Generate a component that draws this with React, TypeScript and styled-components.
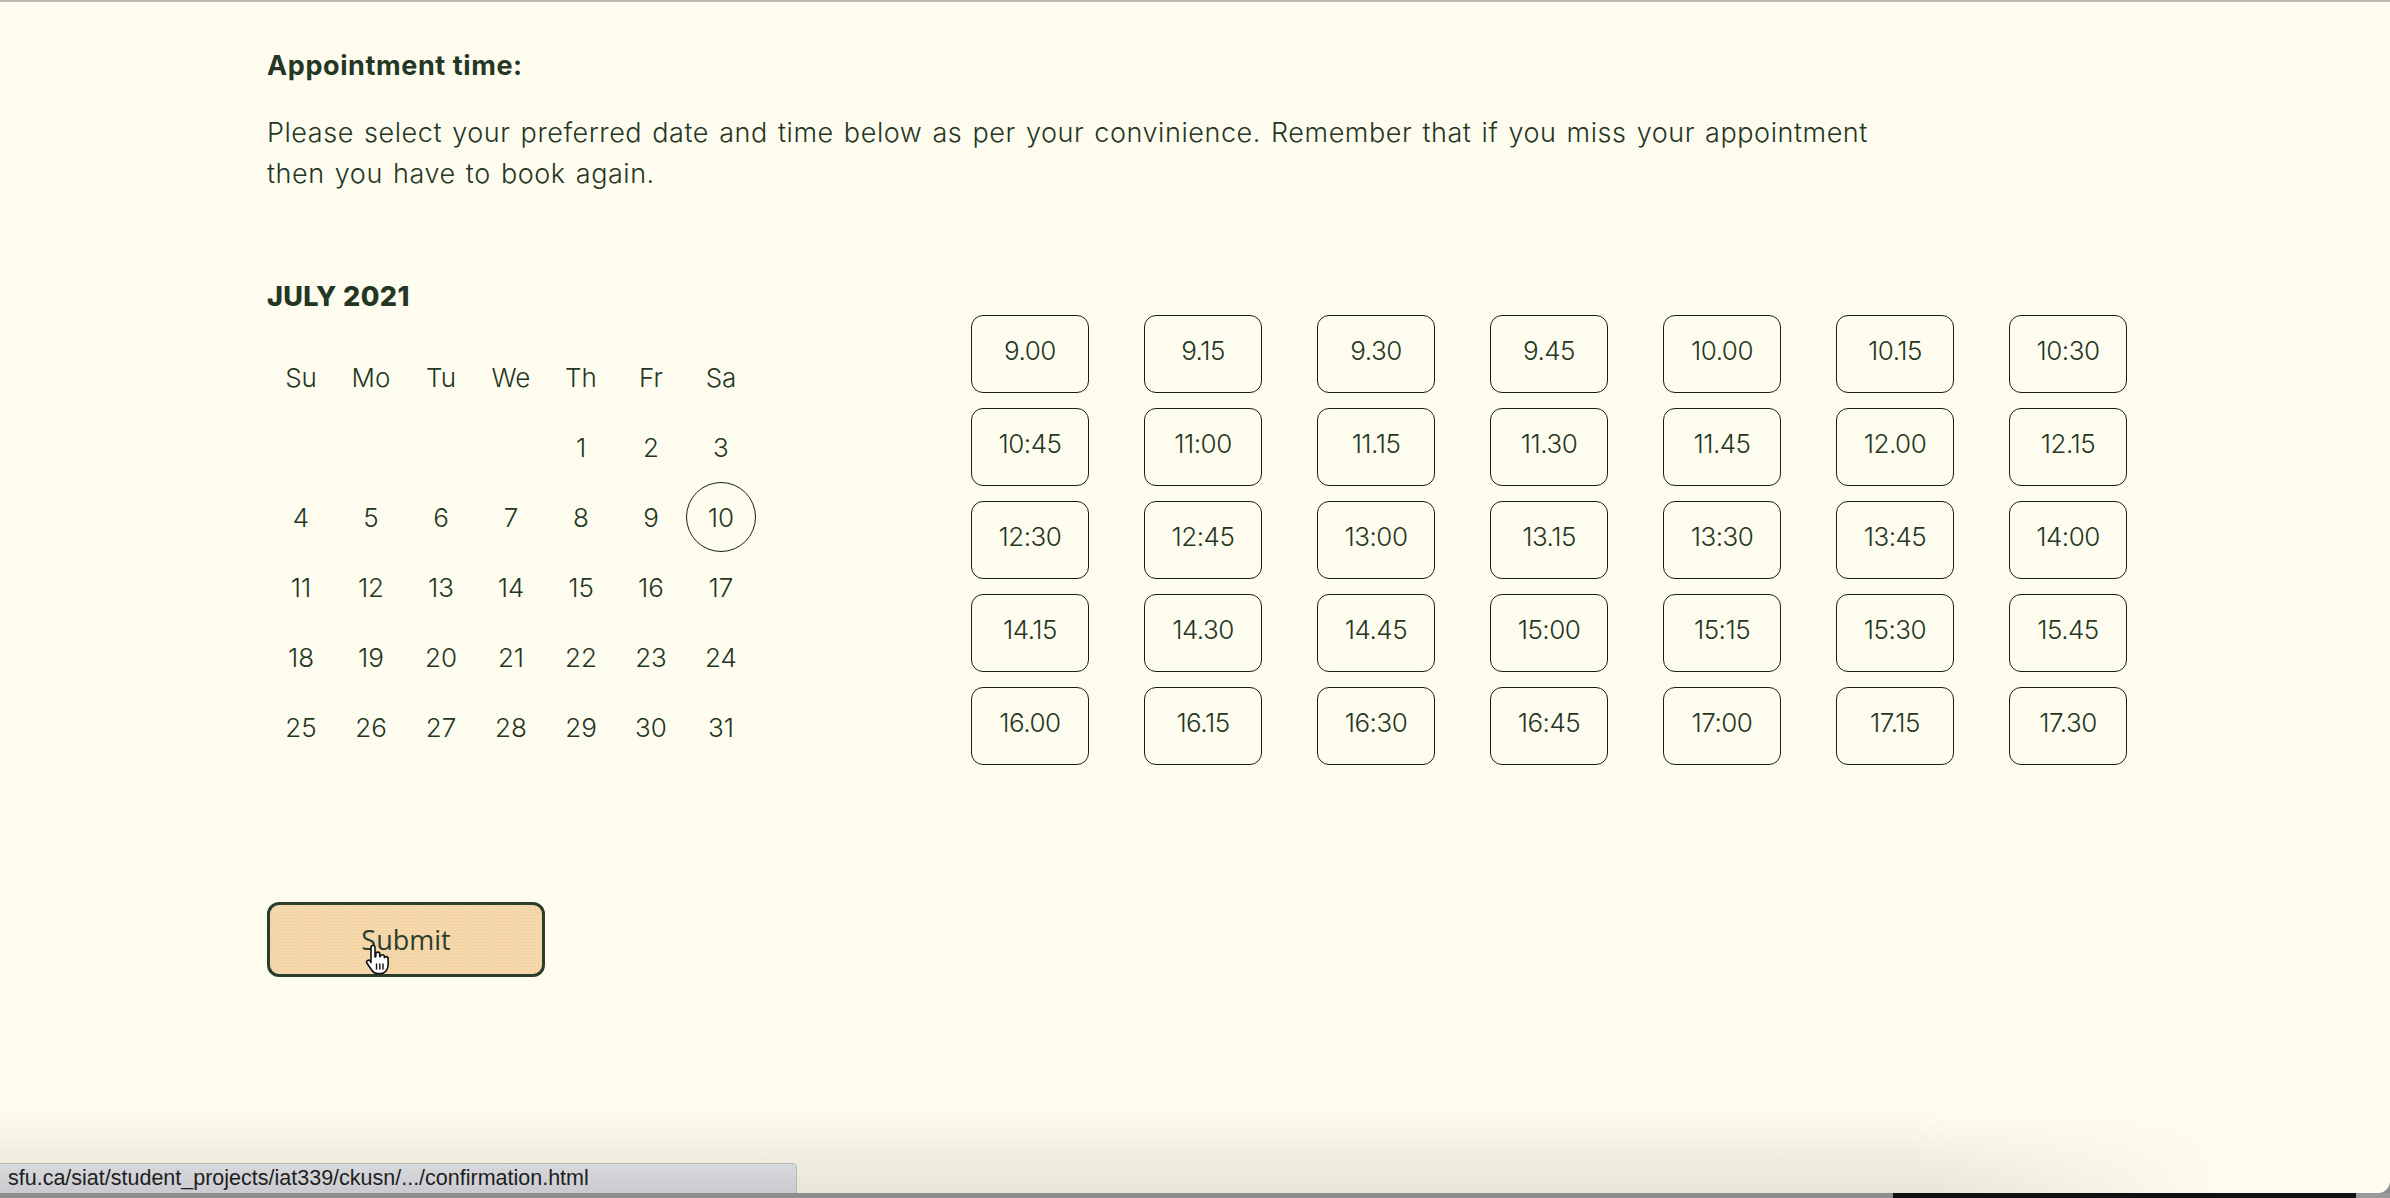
import React from "react";
import styled, { createGlobalStyle } from "styled-components";

const GlobalStyle = createGlobalStyle`
  html, body { margin: 0; padding: 0; }
  body {
    background: #8c8c8c;
    font-family: "Inter", "Lato", sans-serif;
    overflow: hidden;
  }
`;

const INK = "#243624";
const CREAM = "#fefcef";

const Screen = styled.div`
  height: 100vh;
  display: flex;
  flex-direction: column;
`;

const Window = styled.div`
  flex: 1;
  position: relative;
  background: ${CREAM};
  border-top: 2px solid #b9b8b2;
  border-bottom-right-radius: 12px;
  overflow: hidden;
`;

const BottomShade = styled.div`
  position: absolute;
  left: 0;
  right: 0;
  bottom: 0;
  height: 80px;
  pointer-events: none;
  background: linear-gradient(to bottom, rgba(200, 195, 175, 0) 0%, rgba(190, 185, 165, 0.35) 100%);
  -webkit-mask-image: linear-gradient(to right, #000 0%, #000 80%, transparent 93%);
  mask-image: linear-gradient(to right, #000 0%, #000 80%, transparent 93%);
`;

const Content = styled.main`
  padding: 45px 0 0 267px;
  color: ${INK};
`;

const Heading = styled.h2`
  margin: 0;
  font-size: 27px;
  line-height: 38px;
  font-weight: 700;
  letter-spacing: 0.6px;
`;

const Intro = styled.p`
  margin: 27px 0 0;
  max-width: 1610px;
  font-size: 27px;
  line-height: 41px;
  font-weight: 300;
  letter-spacing: 0.55px;
  word-spacing: 2px;
`;

const Booking = styled.section`
  margin-top: 85px;
  display: flex;
  align-items: flex-start;
  gap: 215px;
`;

const CalendarBox = styled.div`
  width: 490px;
  margin-left: -1px;
`;

const Month = styled.h3`
  margin: 0;
  font-size: 27px;
  line-height: 36px;
  font-weight: 800;
  letter-spacing: 0.4px;
  padding-left: 1px;
`;

const DayGrid = styled.div`
  margin-top: 27px;
  display: grid;
  grid-template-columns: repeat(7, 70px);
  grid-auto-rows: 70px;
`;

const Cell = styled.div<{ $selected?: boolean }>`
  display: flex;
  align-items: center;
  justify-content: center;
  box-sizing: border-box;
  font-size: 26px;
  font-weight: 300;
  border-radius: 50%;
  border: 1.5px solid ${(p) => (p.$selected ? "#152015" : "transparent")};
`;

const SlotGrid = styled.div`
  margin-top: 36px;
  display: grid;
  grid-template-columns: repeat(7, 118px);
  grid-auto-rows: 78px;
  column-gap: 55px;
  row-gap: 15px;
`;

const Slot = styled.button`
  box-sizing: border-box;
  display: flex;
  align-items: center;
  justify-content: center;
  padding: 0 0 8px;
  background: transparent;
  border: 1.6px solid #142014;
  border-radius: 12px;
  font-family: "Inter", "Lato", sans-serif;
  font-size: 26px;
  font-weight: 300;
  color: ${INK};
  letter-spacing: -0.5px;
`;

const SubmitButton = styled.button`
  position: relative;
  margin-top: 137px;
  width: 278px;
  height: 75px;
  box-sizing: border-box;
  border: 3px solid #2b3d2b;
  border-radius: 12px;
  background-color: #f6d8ad;
  background-image: radial-gradient(rgba(230, 170, 100, 0.35) 0.6px, transparent 0.8px);
  background-size: 3px 3px;
  font-family: "Open Sans", "Lato", sans-serif;
  font-size: 27px;
  font-weight: 400;
  color: #2b3d2b;
  display: flex;
  align-items: center;
  justify-content: center;
`;

const Cursor = styled.svg`
  position: absolute;
  left: 94px;
  top: 38px;
  width: 28px;
  height: 32px;
`;

const StatusBar = styled.div`
  position: absolute;
  left: 0;
  bottom: 0;
  width: 797px;
  height: 30px;
  box-sizing: border-box;
  padding-left: 8px;
  display: flex;
  align-items: center;
  background: linear-gradient(to bottom, #d8d9dd, #c9cbcf);
  border-top: 1px solid #b7b8bb;
  border-right: 1px solid #b7b8bb;
  border-top-right-radius: 5px;
  font-family: "Liberation Sans", Arial, sans-serif;
  font-size: 21.5px;
  color: #1e1e1e;
`;

const Desk = styled.div`
  height: 5px;
  display: flex;
`;

const DeskPart = styled.div<{ $w: string; $c: string }>`
  width: ${(p) => p.$w};
  background: ${(p) => p.$c};
`;

const days = ["Su", "Mo", "Tu", "We", "Th", "Fr", "Sa"];
const slots = [
  "9.00", "9.15", "9.30", "9.45", "10.00", "10.15", "10:30",
  "10:45", "11:00", "11.15", "11.30", "11.45", "12.00", "12.15",
  "12:30", "12:45", "13:00", "13.15", "13:30", "13:45", "14:00",
  "14.15", "14.30", "14.45", "15:00", "15:15", "15:30", "15.45",
  "16.00", "16.15", "16:30", "16:45", "17:00", "17.15", "17.30",
];

export default function App() {
  const dates: (number | null)[] = [null, null, null, null];
  for (let d = 1; d <= 31; d++) dates.push(d);

  return (
    <>
      <GlobalStyle />
      <Screen>
        <Window>
          <Content>
            <Heading>Appointment time:</Heading>
            <Intro>
              Please select your preferred date and time below as per your convinience. Remember that if you miss your appointment then you have to book again.
            </Intro>
            <Booking>
              <CalendarBox>
                <Month>JULY 2021</Month>
                <DayGrid>
                  {days.map((d) => (
                    <Cell key={d}>{d}</Cell>
                  ))}
                  {dates.map((d, i) => (
                    <Cell key={i} $selected={d === 10}>
                      {d ?? ""}
                    </Cell>
                  ))}
                </DayGrid>
              </CalendarBox>
              <SlotGrid>
                {slots.map((s) => (
                  <Slot key={s}>{s}</Slot>
                ))}
              </SlotGrid>
            </Booking>
            <SubmitButton>
              Submit
              <Cursor viewBox="0 0 28 32">
                <path
                  d="M9 2.5c1.2 0 2 .9 2 2v9.5l.8-.2V11c0-1.1.9-1.9 2-1.9s2 .8 2 1.9v2.6l.6-.1c0-1 .9-1.8 2-1.8s2 .8 2 1.8v1.2c.3-.7 1-1.1 1.8-1.1 1.1 0 1.9.8 1.9 1.9v6.5c0 4.5-3 8.5-7.5 8.5h-3c-2.4 0-4.2-1-5.6-3l-5-7.2c-.6-.9-.4-2.1.5-2.7.9-.6 2-.4 2.7.4L7 19.6V4.5c0-1.1.8-2 2-2z"
                  fill="#fff"
                  stroke="#111"
                  strokeWidth="1.6"
                  strokeLinejoin="round"
                />
                <path d="M12.5 21v5M15.8 21v5M19 21v5" stroke="#111" strokeWidth="1.4" strokeLinecap="round" />
              </Cursor>
            </SubmitButton>
          </Content>
          <BottomShade />
          <StatusBar>sfu.ca/siat/student_projects/iat339/ckusn/.../confirmation.html</StatusBar>
        </Window>
        <Desk>
          <DeskPart $w="1893px" $c="#8e8e8e" />
          <DeskPart $w="463px" $c="#111" />
          <DeskPart $w="34px" $c="#9a9a9a" />
        </Desk>
      </Screen>
    </>
  );
}
